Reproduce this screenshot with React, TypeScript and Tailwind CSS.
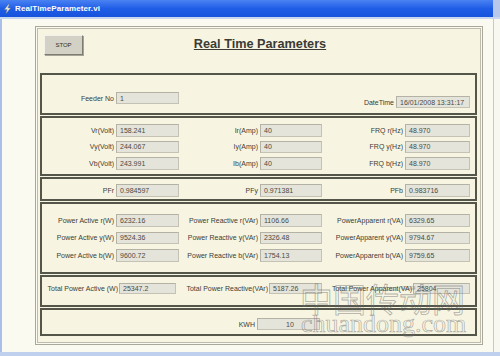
import React from 'react';

type Col = { label: string; value: string };

const inputCls =
  'flex items-center bg-[#e5e4da] border border-[#c3c2b4] border-t-[#b3b2a4] border-l-[#b3b2a4] pl-[3px] text-[7px] text-[#4a4a44] leading-none whitespace-nowrap overflow-hidden';
const labelCls = 'text-right text-[7px] text-[#3c3c36] leading-none whitespace-nowrap';

const GridRow = ({ cols, h }: { cols: Col[]; h: string }) => (
  <div className={`flex items-center ${h}`}>
    <span className={`${labelCls} w-[72px] mr-[2px]`}>{cols[0].label}</span>
    <div className={`${inputCls} w-[63px] h-full`}>{cols[0].value}</div>
    <span className={`${labelCls} w-[79px] mr-[2px]`}>{cols[1].label}</span>
    <div className={`${inputCls} w-[62px] h-full`}>{cols[1].value}</div>
    <span className={`${labelCls} w-[81px] mr-[2px]`}>{cols[2].label}</span>
    <div className={`${inputCls} w-[65px] h-full`}>{cols[2].value}</div>
  </div>
);

const Section = ({ className, children }: { className: string; children?: React.ReactNode }) => (
  <div className={`border-2 border-[#55564a] bg-[#f7f5e2] ${className}`}>{children}</div>
);

const voltRows: Col[][] = [
  [
    { label: 'Vr(Volt)', value: '158.241' },
    { label: 'Ir(Amp)', value: '40' },
    { label: 'FRQ r(Hz)', value: '48.970' },
  ],
  [
    { label: 'Vy(Volt)', value: '244.067' },
    { label: 'Iy(Amp)', value: '40' },
    { label: 'FRQ y(Hz)', value: '48.970' },
  ],
  [
    { label: 'Vb(Volt)', value: '243.991' },
    { label: 'Ib(Amp)', value: '40' },
    { label: 'FRQ b(Hz)', value: '48.970' },
  ],
];

const powerRows: Col[][] = [
  [
    { label: 'Power Active r(W)', value: '6232.16' },
    { label: 'Power Reactive r(VAr)', value: '1106.66' },
    { label: 'PowerApparent r(VA)', value: '6329.65' },
  ],
  [
    { label: 'Power Active y(W)', value: '9524.36' },
    { label: 'Power Reactive y(VAr)', value: '2326.48' },
    { label: 'PowerApparent y(VA)', value: '9794.67' },
  ],
  [
    { label: 'Power Active b(W)', value: '9600.72' },
    { label: 'Power Reactive b(VAr)', value: '1754.13' },
    { label: 'PowerApparent b(VA)', value: '9759.65' },
  ],
];

export default function App() {
  return (
    <div className="relative w-[500px] h-[356px] overflow-hidden bg-[#fbfaf1] font-['Liberation_Sans',Arial,sans-serif] flex flex-col">
      {/* title bar */}
      <div className="h-[17px] flex shrink-0">
        <div className="flex-1 flex items-center gap-[3px] pl-[3px] bg-gradient-to-b from-[#4a82f2] via-[#1f5de6] to-[#1553dc]">
          <svg width="9" height="10" viewBox="0 0 9 10">
            <path d="M5.5 0.5 L1.5 5.5 L4.2 5.5 L3 9.5 L7.5 4 L4.8 4 L6.2 0.5 Z" fill="#f4f0d8" stroke="#8a8a7a" strokeWidth="0.4" />
          </svg>
          <span className="text-[8px] font-bold text-white leading-none tracking-[0.1px]">RealTimeParameter.vi</span>
        </div>
        <div className="w-[7px] bg-[#b7c8ec]" />
      </div>
      <div className="h-[2px] bg-[#c9d6ef] shrink-0" />

      {/* window body */}
      <div className="flex-1 flex">
        <div className="w-[2px] bg-[#a9c1ea]" />
        <div className="w-[33px]" />
        <div className="flex flex-col">
          <div className="h-[7px]" />
          <div className="w-[448px] h-[319px] border border-[#a9a899] p-[1px]">
            <div className="h-full border border-[#bdbcad] bg-[#f7f5e2] flex flex-col pl-[2px]">
              {/* header */}
              <div className="h-[44px] grid grid-cols-[1fr_auto_1fr] items-start">
                <div>
                  <button
                    type="button"
                    className="mt-[6px] ml-[4px] w-[39px] h-[20px] bg-[#d3d1c5] border border-[#f2f1ea] border-r-[#7d7c72] border-b-[#7d7c72] shadow-[1px_1px_0_#a5a497] flex items-center justify-center text-[6px] text-[#2f2f2a] leading-none"
                  >
                    STOP
                  </button>
                </div>
                <div className="mt-[9px] text-[12.7px] font-bold text-[#3b3b36] underline underline-offset-[1px] leading-none">
                  Real Time Parameters
                </div>
                <div />
              </div>

              <div className="w-[437px] flex flex-col gap-[1px]">
                {/* feeder / datetime */}
                <Section className="h-[42px] flex items-start">
                  <div className="flex items-center mt-[17px] h-[12px]">
                    <span className={`${labelCls} w-[72px] mr-[2px]`}>Feeder No</span>
                    <div className={`${inputCls} w-[63px] h-full`}>1</div>
                  </div>
                  <div className="ml-auto mr-[5px] flex items-center mt-[21px] h-[12px]">
                    <span className={`${labelCls} mr-[2px]`}>DateTime</span>
                    <div className={`${inputCls} w-[74px] h-full`}>16/01/2008 13:31:17</div>
                  </div>
                </Section>

                {/* voltage / current / frequency */}
                <Section className="h-[60px] pt-[6px] flex flex-col gap-[4px]">
                  {voltRows.map((r, i) => (
                    <GridRow key={i} cols={r} h="h-[12.5px]" />
                  ))}
                </Section>

                {/* power factor */}
                <Section className="h-[24px] pt-[5px]">
                  <GridRow
                    h="h-[13px]"
                    cols={[
                      { label: 'PFr', value: '0.984597' },
                      { label: 'PFy', value: '0.971381' },
                      { label: 'PFb', value: '0.983716' },
                    ]}
                  />
                </Section>

                {/* power */}
                <Section className="h-[72px] pt-[10px] flex flex-col gap-[5px]">
                  {powerRows.map((r, i) => (
                    <GridRow key={i} cols={r} h="h-[12.5px]" />
                  ))}
                </Section>

                {/* totals */}
                <Section className="h-[32px] pt-[6px]">
                  <div className="flex items-center h-[11px]">
                    <span className={`${labelCls} w-[76px] mr-[1px]`}>Total Power Active (W)</span>
                    <div className={`${inputCls} w-[57px] h-full`}>25347.2</div>
                    <span className={`${labelCls} w-[92px] mr-[1px]`}>Total Power Reactive(VAr)</span>
                    <div className={`${inputCls} w-[53px] h-full`}>5187.26</div>
                    <span className={`${labelCls} w-[90px] mr-[1px]`}>Total Power Apparent(VA)</span>
                    <div className={`${inputCls} w-[57px] h-full`}>25804</div>
                  </div>
                </Section>

                {/* kwh */}
                <Section className="h-[28px] pt-[8px]">
                  <div className="flex items-center h-[12px]">
                    <span className={`${labelCls} w-[213px] mr-[2px]`}>KWH</span>
                    <div className={`${inputCls} w-[63px] h-full justify-center pl-0`}>10</div>
                  </div>
                </Section>
              </div>
            </div>
          </div>
        </div>
        <div className="w-[10px]" />
        <div className="w-[1px] bg-[#c9cac6]" />
        <div className="flex-1 bg-[#f8f8f1]" />
      </div>
      <div className="h-[4px] bg-[#bfd0ee] shrink-0" />

      {/* watermark */}
      <div className="absolute left-[300px] top-[282px] text-[33px] leading-none font-['Noto_Sans_CJK_SC',sans-serif] text-transparent [-webkit-text-stroke:0.8px_rgba(110,110,110,0.55)]">
        中国传动网
      </div>
      <div className="absolute left-[301px] top-[311px] text-[26px] leading-none font-['Liberation_Serif',serif] text-transparent [-webkit-text-stroke:0.7px_rgba(110,110,110,0.55)]">
        chuandong.com
      </div>
    </div>
  );
}
